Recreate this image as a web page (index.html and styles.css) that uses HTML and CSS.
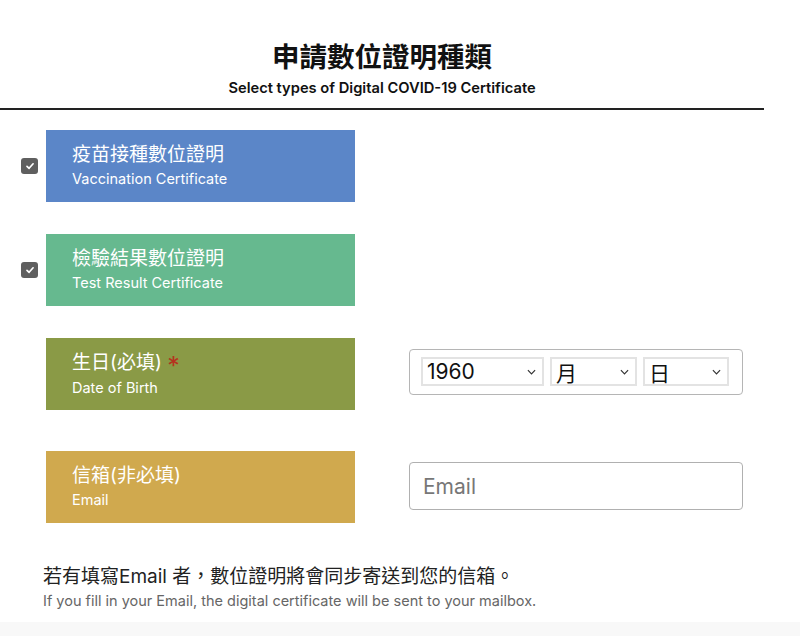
FILE: index.html
```html
<!DOCTYPE html>
<html lang="zh-Hant">
<head>
  <meta charset="UTF-8">
  <meta name="viewport" content="width=device-width, initial-scale=1.0">
  <title>申請數位證明種類</title>
  <link rel="stylesheet" href="styles.css">
</head>
<body>
    <div class="container">
        <header class="page-head">
            <h1>申請數位證明種類</h1>
            <p class="subtitle">Select types of Digital COVID-19 Certificate</p>
        </header>

        <div class="row">
            <div class="check-col"><span class="checkbox"><svg viewBox="0 0 10 10" width="10" height="10"><path d="M2 5.3 L4.1 7.3 L8.1 2.8" fill="none" stroke="#fff" stroke-width="1.7" stroke-linecap="round" stroke-linejoin="round"/></svg></span></div>
            <div class="label-box blue">
                <div class="zh">疫苗接種數位證明</div>
                <div class="en">Vaccination Certificate</div>
            </div>
        </div>

        <div class="row">
            <div class="check-col"><span class="checkbox"><svg viewBox="0 0 10 10" width="10" height="10"><path d="M2 5.3 L4.1 7.3 L8.1 2.8" fill="none" stroke="#fff" stroke-width="1.7" stroke-linecap="round" stroke-linejoin="round"/></svg></span></div>
            <div class="label-box green">
                <div class="zh">檢驗結果數位證明</div>
                <div class="en">Test Result Certificate</div>
            </div>
        </div>

        <div class="row">
            <div class="check-col"></div>
            <div class="label-box olive">
                <div class="zh">生日(必填) <span class="req">*</span></div>
                <div class="en">Date of Birth</div>
            </div>
            <div class="field">
                <div class="date-group">
                    <div class="select year">1960<svg class="chev" viewBox="0 0 10 6" width="9" height="6"><path d="M1 1 L5 5 L9 1" fill="none" stroke="#333" stroke-width="1.3"/></svg></div>
                    <div class="select month">月<svg class="chev" viewBox="0 0 10 6" width="9" height="6"><path d="M1 1 L5 5 L9 1" fill="none" stroke="#333" stroke-width="1.3"/></svg></div>
                    <div class="select day">日<svg class="chev" viewBox="0 0 10 6" width="9" height="6"><path d="M1 1 L5 5 L9 1" fill="none" stroke="#333" stroke-width="1.3"/></svg></div>
                </div>
            </div>
        </div>

        <div class="row last">
            <div class="check-col"></div>
            <div class="label-box gold">
                <div class="zh">信箱(非必填)</div>
                <div class="en">Email</div>
            </div>
            <div class="field">
                <input class="email" type="text" placeholder="Email">
            </div>
        </div>

        <div class="note">
            <p class="note-zh">若有填寫Email 者，數位證明將會同步寄送到您的信箱。</p>
            <p class="note-en">If you fill in your Email, the digital certificate will be sent to your mailbox.</p>
        </div>
    </div>
    <div class="bottom-band"></div>
</body>
</html>
```

FILE: styles.css
```css
body {
  font-family: 'Inter', 'Noto Sans CJK TC', sans-serif;
  background: #fff;
  color: #111;
  margin: 0;
  padding: 0;
}
.container {
  width: 764px;
}
.page-head {
  text-align: center;
  padding-top: 40px;
  padding-bottom: 10px;
  border-bottom: 2px solid #222;
}
h1 {
  font-size: 27.5px;
  font-weight: bold;
  line-height: 34px;
  margin: 0;
}
.subtitle {
  font-size: 14.7px;
  font-weight: 600;
  margin: 4px 0 0;
  line-height: 20px;
}
.row {
  display: flex;
  align-items: flex-start;
  margin-top: 32px;
}
.row:first-of-type {
  margin-top: 20px;
}
.row.last {
  margin-top: 41px;
}
.check-col {
  width: 46px;
  height: 72px;
  display: flex;
  align-items: center;
  padding-left: 21px;
  box-sizing: border-box;
}
.checkbox {
  width: 17px;
  height: 16px;
  background: #5f5f5f;
  border-radius: 3px;
  display: flex;
  align-items: center;
  justify-content: center;
}
.label-box {
  width: 309px;
  height: 72px;
  box-sizing: border-box;
  padding: 13px 0 0 26px;
  color: #fff;
}
.label-box .zh {
  font-size: 19px;
  line-height: 24px;
}
.label-box .en {
  font-size: 14.5px;
  line-height: 20px;
  margin-top: 2px;
}
.blue { background: #5b86c8; }
.green { background: #66b98f; }
.olive { background: #8a9a46; }
.gold { background: #d0a94e; }
.req {
  color: #b5331e;
  font-size: 25px;
  line-height: 20px;
  vertical-align: -6px;
}
.field {
  margin-left: 54px;
  margin-top: 11px;
  width: 334px;
}
.date-group {
  display: flex;
  gap: 6px;
  height: 46px;
  box-sizing: border-box;
  border: 1px solid #b5b5b5;
  border-radius: 4px;
  padding: 7px 0 0 11px;
}
.select {
  height: 29px;
  box-sizing: border-box;
  border: 2px solid #e3e3e3;
  display: flex;
  align-items: center;
  justify-content: space-between;
  padding: 0 6px 0 4px;
  font-size: 21px;
  color: #111;
}
.year { width: 123px; }
.month { width: 87px; }
.day { width: 86px; }
.email {
  width: 100%;
  height: 48px;
  box-sizing: border-box;
  border: 1px solid #b0b0b0;
  border-radius: 4px;
  padding: 0 13px;
  font-family: inherit;
  font-size: 21px;
}
.email::placeholder {
  color: #777;
}
.note {
  padding-left: 43px;
  margin-top: 42px;
}
.note-zh {
  font-size: 19px;
  color: #222;
  margin: 0;
  line-height: 24px;
}
.note-en {
  font-size: 14.5px;
  color: #666;
  margin: 2px 0 0;
  line-height: 20px;
}
.bottom-band {
  position: absolute;
  left: 0;
  right: 0;
  top: 622px;
  height: 14px;
  background: #f8f8f8;
}
```
